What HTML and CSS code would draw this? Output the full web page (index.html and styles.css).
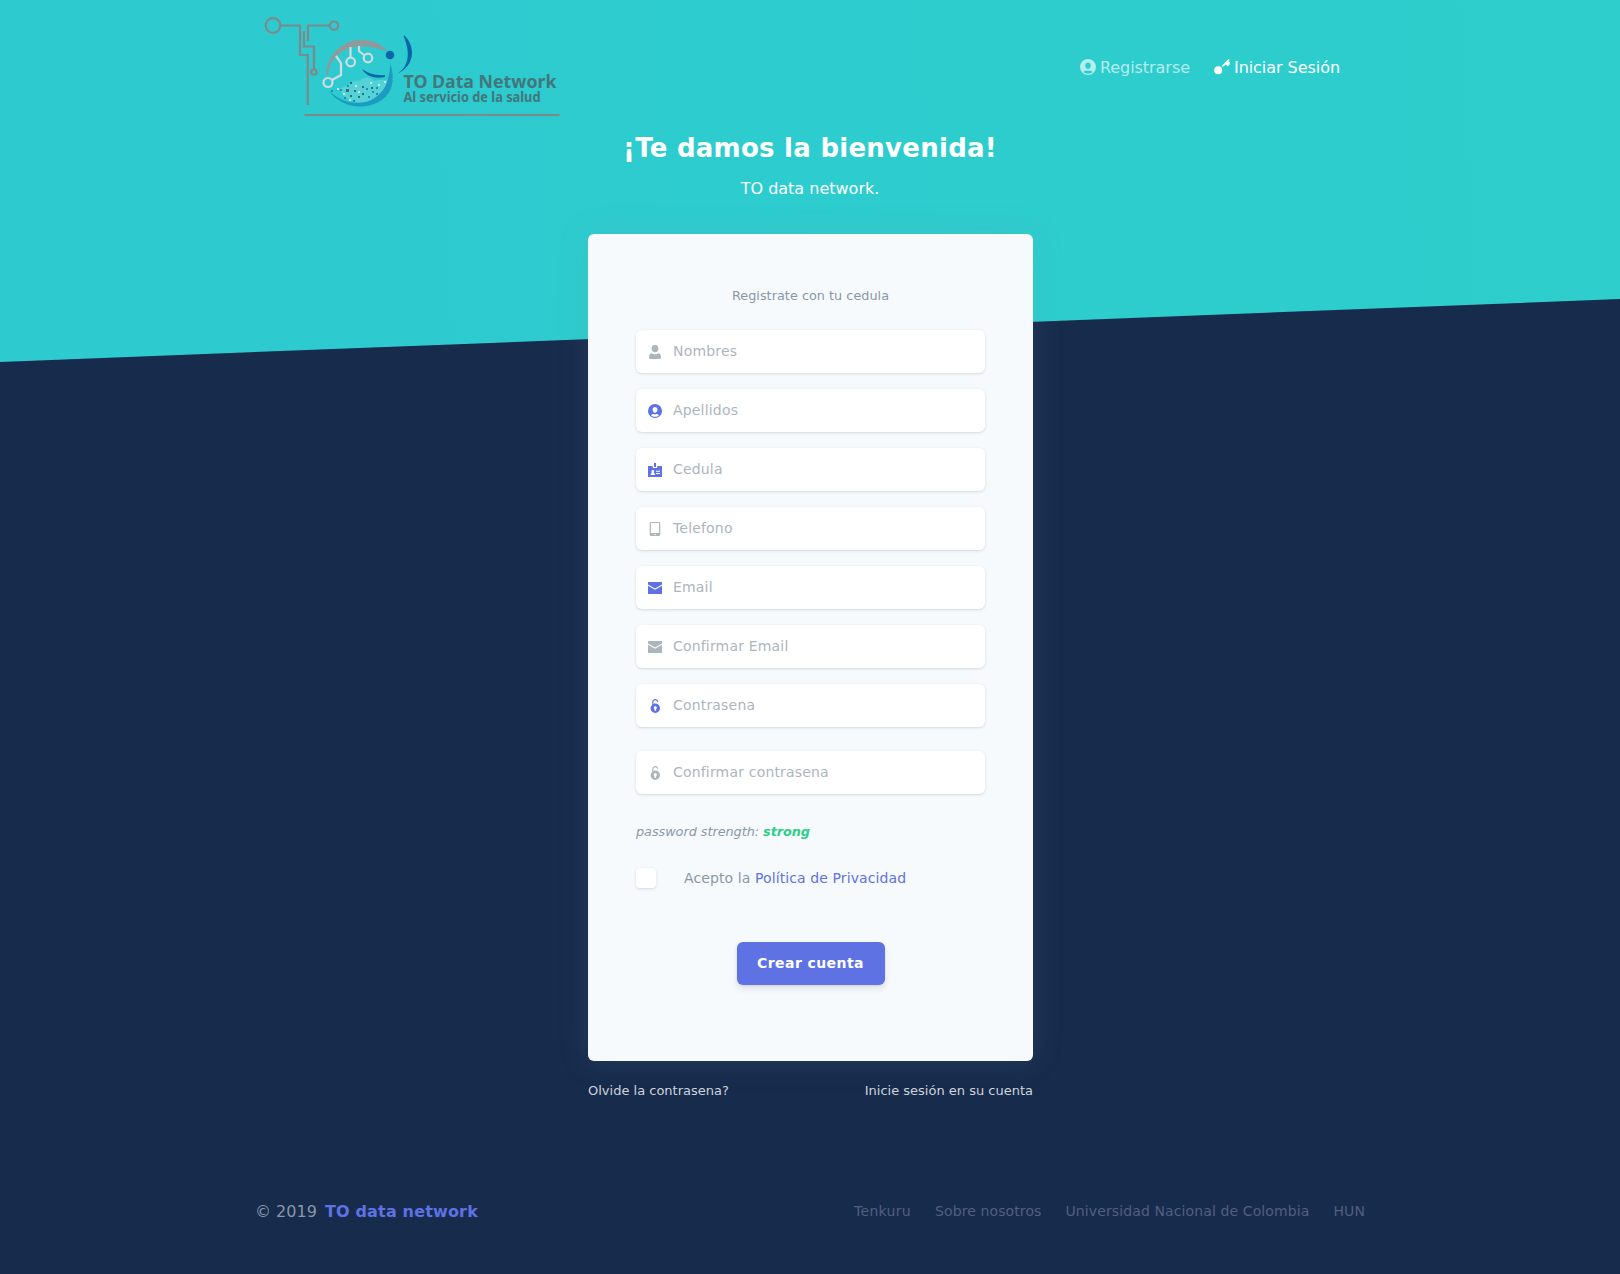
FILE: index.html
```html
<!DOCTYPE html>
<html lang="es">
<head>
<meta charset="utf-8">
<title>TO data network</title>
<link rel="stylesheet" href="styles.css">
</head>
<body>
<svg class="sprite" aria-hidden="true">
  <symbol id="i-single" viewBox="0 0 14 14"><ellipse cx="7" cy="3.6" rx="3.4" ry="3.7"/><path d="M3.3 8.300C4.600 9 5.800 9.200 7 9.200s2.400-.2 3.700-.9C12.300 8.700 13 10.500 13 12.300c0 1-.6 1.700-1.600 1.700H2.600C1.600 14 1 13.300 1 12.300 1 10.500 1.700 8.700 3.300 8.300z"/></symbol>
  <symbol id="i-circle" viewBox="0 0 14 14"><path fill-rule="evenodd" d="M7 0a7 7 0 1 1 0 14A7 7 0 0 1 7 0zM7 3.100C5.500 3.100 4.600 4.100 4.600 5.600S5.600 8.800 7 8.800s2.400-1.700 2.400-3.200S8.500 3.100 7 3.100zM3 11.300C4 12.300 5.400 12.800 7 12.800s3-.5 4-1.500c-.7-.9-1.700-1.200-2.700-1.300-.8.500-1.800.5-2.600 0-1 .1-2 .4-2.700 1.300z"/></symbol>
  <symbol id="i-badge" viewBox="0 0 14 14"><path fill-rule="evenodd" d="M0 3h4.700v1.200c0 .5.4.8.8.8h3c.4 0 .8-.3.800-.8V3H14v11H0zM2.500 12h4.600c0-1.200-.7-1.700-1.400-1.900C6.500 9 6.300 7 4.800 7S3.100 9 3.900 10.100C3.200 10.300 2.500 10.800 2.500 12zM8 7.800v1h4v-1zM8 10v1h4v-1z"/><rect x="6" width="2" height="4"/></symbol>
  <symbol id="i-tablet" viewBox="0 0 14 14"><path fill-rule="evenodd" d="M3.200 0h7.600c.9 0 1.500.6 1.500 1.500v11c0 .9-.6 1.500-1.500 1.500H3.200c-.9 0-1.500-.6-1.500-1.500v-11C1.700.6 2.300 0 3.200 0zM2.900 1.100V11h8.200V1.100zM6 12.200v.8h2v-.8z"/></symbol>
  <symbol id="i-mail" viewBox="0 0 14 14"><path d="M0 1h14v2.600L7 7.500 0 3.600z"/><path d="M0 4.800l7 4 7-4V13H0z"/></symbol>
  <symbol id="i-lock" viewBox="0 0 14 14"><path fill-rule="evenodd" d="M4.200 5.900V3.300C4.200 1.400 5.500 0 7.200 0c1.600 0 2.800 1.100 3.100 2.700l-1.100.3C9 1.900 8.300 1.200 7.200 1.200c-1.100 0-1.800.9-1.800 2.100v1.600C8.500 3.700 12 6 12 9.300c0 2.700-2 4.700-4.700 4.700S2.600 12 2.600 9.300c0-1.400.6-2.600 1.600-3.400zM7.300 7.200c-.9 0-1.600.7-1.600 1.500 0 .6.300 1.100.8 1.300v1.800h1.600V10c.5-.2.8-.7.8-1.300 0-.8-.7-1.500-1.600-1.500z"/></symbol>
  <symbol id="i-key" viewBox="0 0 16 16"><circle cx="4.200" cy="11.200" r="4"/><path d="M7.600 7L14.600 0l1.200 1-1.200 1.300 1.200 1.200-.1 1.800-1.900 2-1.900-1.700-2.800 2.200z"/></symbol>
</svg>
<header class="hero">
  <nav class="navbar">
    <svg class="logo" width="300" height="110" viewBox="0 0 300 110" role="img" aria-label="TO Data Network">
      <g fill="none" stroke="#7d8a8c" stroke-width="2.200">
        <circle cx="8" cy="12.500" r="7.300"/><circle cx="69" cy="12.500" r="4.200"/><circle cx="49" cy="59" r="2.700"/>
        <path d="M15.500 12.500H35V42h7.800v50M64.500 12.500H43V28M39 18v15.500h10V56"/>
      </g>
      <path d="M39.500 102H294.500" stroke="#7d8a8c" stroke-width="2"/>
      <path d="M61 62C63 37 83 25 100 27c11 1 17 5 22 11-18-6-36-7-48 3-7 6-10 12-11 21z" fill="#8f9a9c"/>
      <path d="M74 76C84 73 86 66 95 68c4-5 10-4 14 0 6-2 9 0 13-1 1 8-5 17-16 21-12 4-26 0-32-12z" fill="#55d2d7"/>
      <path d="M64 78c14 13 34 16 47 6 11-8 13-19 14.500-33 6 19 0 35-18 40.500-16 5.500-34 0-43.500-13.500z" fill="#1b9cc0"/>
      <path d="M97 56c7 5 15 7 23 6v2c-9 2-18 0-23-8z" fill="#0865a8"/>
      <path d="M139.500 22.500C149.500 32 152 52 131 61.500 143 55 146.500 42 138.500 23z" fill="#0865a8"/>
      <circle cx="125" cy="42" r="4.300" fill="#0865a8"/>
      <g fill="none" stroke="#d0dcdf" stroke-width="2.200"><circle cx="63" cy="69.500" r="4.500"/><circle cx="85.700" cy="49" r="4.300"/><circle cx="103" cy="45" r="4.300"/><path d="M71 43l5 7v12l-9 5M85.500 34v11M94 33v5l5 4"/></g>
      <g fill="#3c6973"><path d="M85 69h2v2h-2zM81 76h3v3h-3zM97 73h2v2h-2zM93 83h2v2h-2zM106 74h2v2h-2zM97 80h2v2h-2zM85 82h2v2h-2zM89 77h2v2h-2z"/></g>
      <g fill="#1b8fb4"><path d="M75 76h2v2h-2zM82 72h2v2h-2zM101 75h2v2h-2zM107 78h2v2h-2zM103 83h2v2h-2zM88 87h2v2h-2zM111 80h2v2h-2zM79 84h2v2h-2zM111 74h2v2h-2zM66 77h2v2h-2z"/></g>
      <g fill="#b8f0f0"><path d="M72 75h2v2h-2zM78 80h2v2h-2zM90 72h2v2h-2zM105 69h2v2h-2zM113 71h2v2h-2zM119 68h2v2h-2zM84 86h2v2h-2zM93 78h2v2h-2z"/></g>
      <g class="logo-text"><text x="138.500" y="75" font-size="18.500" textLength="153" lengthAdjust="spacingAndGlyphs">TO Data Network</text><text x="138.500" y="89" font-size="14" textLength="137" lengthAdjust="spacingAndGlyphs">Al servicio de la salud</text></g>
    </svg>
    <div class="nav-links">
      <a class="nav-link"><svg class="nav-icon"><use href="#i-circle"/></svg>Registrarse</a>
      <a class="nav-link active"><svg class="nav-icon"><use href="#i-key"/></svg>Iniciar Sesión</a>
    </div>
  </nav>
  <h1 class="title">¡Te damos la bienvenida!</h1>
  <p class="lead">TO data network.</p>
</header>
<main class="page">
  <form class="card">
    <p class="hint">Registrate con tu cedula</p>
    <label class="field"><svg class="icon"><use href="#i-single"/></svg><input class="input" placeholder="Nombres"></label>
    <label class="field accent"><svg class="icon"><use href="#i-circle"/></svg><input class="input" placeholder="Apellidos"></label>
    <label class="field accent"><svg class="icon"><use href="#i-badge"/></svg><input class="input" placeholder="Cedula"></label>
    <label class="field"><svg class="icon"><use href="#i-tablet"/></svg><input class="input" placeholder="Telefono"></label>
    <label class="field accent"><svg class="icon"><use href="#i-mail"/></svg><input class="input" placeholder="Email"></label>
    <label class="field"><svg class="icon"><use href="#i-mail"/></svg><input class="input" placeholder="Confirmar Email"></label>
    <label class="field accent"><svg class="icon"><use href="#i-lock"/></svg><input class="input" type="password" placeholder="Contrasena"></label>
    <label class="field confirm"><svg class="icon"><use href="#i-lock"/></svg><input class="input" type="password" placeholder="Confirmar contrasena"></label>
    <p class="strength">password strength: <b class="strong">strong</b></p>
    <label class="terms"><input class="check" type="checkbox"><span class="terms-text">Acepto la <a class="policy">Política de Privacidad</a></span></label>
    <button class="submit" type="button">Crear cuenta</button>
  </form>
  <div class="card-links"><a>Olvide la contrasena?</a><a>Inicie sesión en su cuenta</a></div>
</main>
<footer class="footer">
  <div class="copyright">© 2019 <b class="brand">TO data network</b></div>
  <div class="footer-links"><a class="tight">Tenkuru</a><a>Sobre nosotros</a><a>Universidad Nacional de Colombia</a><a>HUN</a></div>
</footer>
</body>
</html>
```
FILE: styles.css
```css
* { box-sizing: border-box; }
body {
  margin: 0;
  min-height: 1274px;
  background: #172b4d;
  font-family: "DejaVu Sans", sans-serif;
  font-size: 16px;
  line-height: 1.5;
}
p, h1 { margin: 0; }
.sprite { display: none; }
.hero {
  height: 362px;
  background: linear-gradient(87deg, #2dcad0, #2dcecc);
  clip-path: polygon(0 0, 100% 0, 100% 299px, 0 100%);
  text-align: center;
  color: #fff;
}
.navbar {
  width: 1110px;
  height: 132px;
  margin: 0 auto;
  padding: 13px 25px 0 10px;
  display: flex;
  justify-content: space-between;
}
.logo { overflow: visible; }
.logo-text { fill: #42777b; font-family: "Noto Sans", sans-serif; font-weight: 700; }
.nav-links { display: flex; gap: 24px; padding-top: 43px; }
.nav-link { display: flex; gap: 4px; height: 24px; color: rgba(255, 255, 255, .65); letter-spacing: -.05px; }
.nav-link.active { color: #fff; }
.nav-icon { width: 16px; height: 16px; margin-top: 3px; fill: currentColor; }
.title { font-size: 26px; font-weight: 600; line-height: 33px; letter-spacing: .26px; }
.lead { margin-top: 12px; line-height: 24px; }
.page { width: 445px; margin: -128px 0 0 588px; position: relative; }
.card {
  height: 827px;
  padding: 48px;
  border-radius: 6px;
  background: #f7fafc;
  box-shadow: 0 0 32px rgba(136, 152, 170, .15);
  color: #8898aa;
}
.hint { height: 48px; padding-top: 4px; font-size: 12.8px; line-height: 19px; text-align: center; letter-spacing: .03px; }
.field {
  height: 43px;
  margin-bottom: 16px;
  padding: 0 0 2px 12px;
  display: flex;
  align-items: center;
  gap: 11px;
  border-radius: 6px;
  background: #fff;
  box-shadow: 0 1px 3px rgba(50, 50, 93, .15), 0 1px 0 rgba(0, 0, 0, .02);
  color: #adb5bd;
}
.field.accent { color: #5e72e4; }
.field.confirm { margin-top: 24px; }
.icon { width: 14px; height: 14px; margin-top: 2px; fill: currentColor; }
.input { flex: 1; border: 0; padding: 0; background: none; font: 14px "DejaVu Sans", sans-serif; letter-spacing: .18px; }
.input::placeholder { color: #adb5bd; opacity: 1; }
.strength { margin-top: 28px; font-size: 12.8px; line-height: 20px; font-style: italic; letter-spacing: -.03px; }
.strong { color: #2dce89; }
.terms { margin-top: 25px; display: flex; align-items: center; gap: 28px; height: 21px; font-size: 14px; letter-spacing: .1px; }
.terms-text { padding-top: 2px; }
.check {
  appearance: none;
  width: 20px;
  height: 20px;
  margin: 0;
  border-radius: 4px;
  background: #fff;
  box-shadow: 0 1px 3px rgba(50, 50, 93, .15), 0 1px 0 rgba(0, 0, 0, .02);
}
.policy { color: #5e72e4; }
.submit {
  display: block;
  width: 148px;
  height: 43px;
  margin: 54px auto 0;
  padding: 0 0 2px;
  border: 0;
  border-radius: 6px;
  background: #5e72e4;
  color: #fff;
  font: 600 14px "DejaVu Sans", sans-serif;
  letter-spacing: .42px;
  box-shadow: 0 4px 6px rgba(50, 50, 93, .11), 0 1px 3px rgba(0, 0, 0, .08);
}
.card-links { margin-top: 20px; display: flex; justify-content: space-between; font-size: 13px; line-height: 20px; color: #ced4da; }
.footer { width: 1110px; margin: 98px auto 0; display: flex; justify-content: space-between; align-items: center; }
.copyright { padding-top: 1px; color: #8898aa; }
.brand { margin-left: 3px; color: #5e72e4; letter-spacing: .17px; }
.footer-links { display: flex; gap: 24px; font-size: 14px; color: #525f7f; letter-spacing: .11px; }
.footer-links .tight { letter-spacing: .3px; }
```
